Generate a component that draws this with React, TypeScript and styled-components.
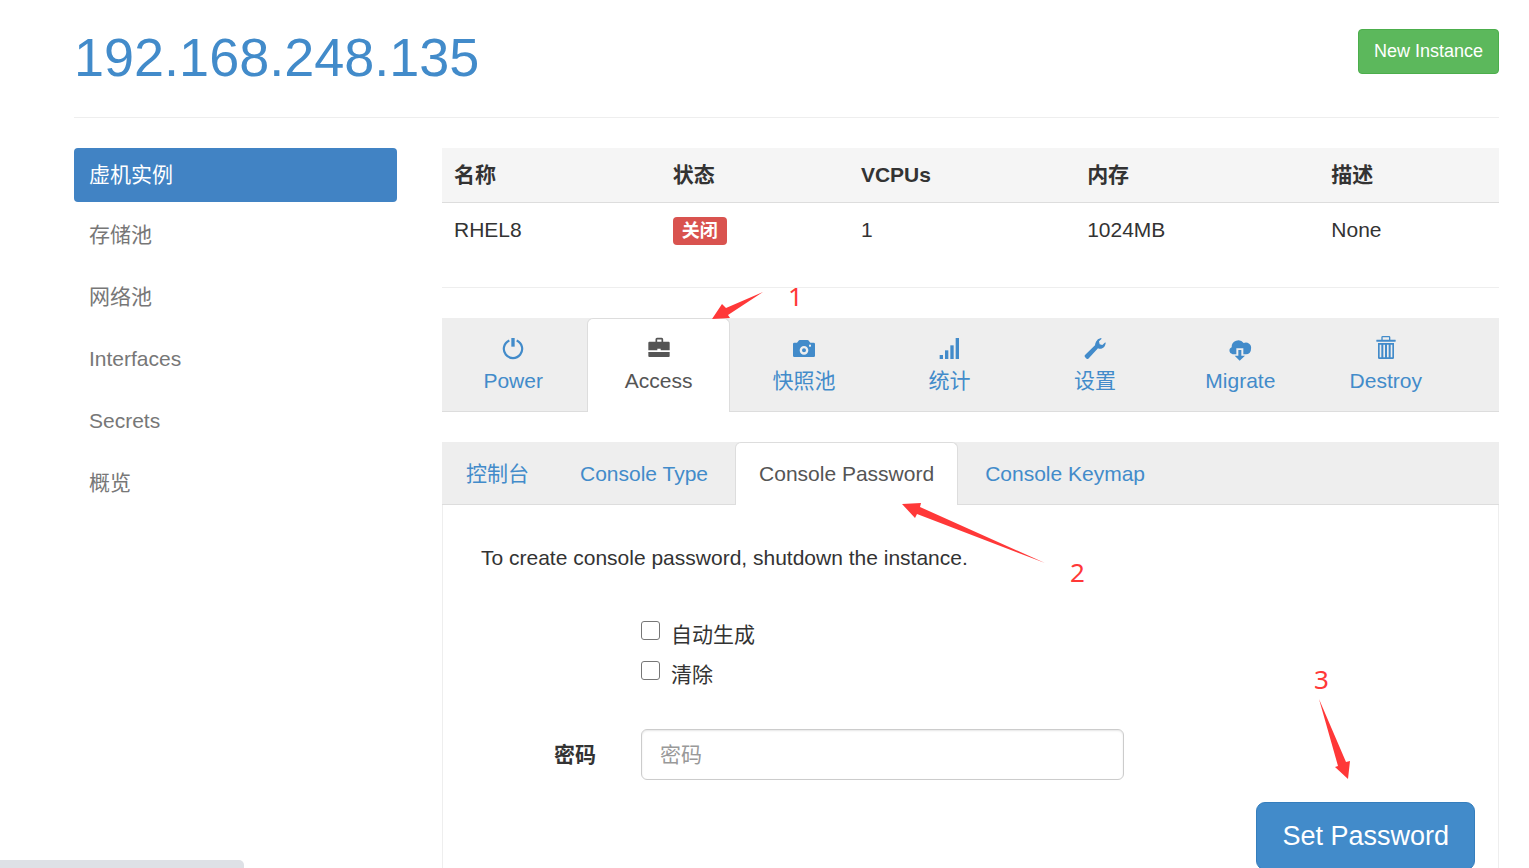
import React, { useState } from 'react';
import styled, { createGlobalStyle } from 'styled-components';

const LINK = '#428bca';
const BAR = '#eeeeee';
const LINE = '#dddddd';
const MARK = '#ff3838';

const GlobalStyle = createGlobalStyle`
  *, *::before, *::after { box-sizing: border-box; }
  body {
    margin: 0;
    background: #fff;
    color: #333;
    font-family: "Liberation Sans", Arial, "Noto Sans CJK SC", sans-serif;
    font-size: 21px;
    line-height: 30px;
  }
  button, input { font-family: inherit; }
  a { color: ${LINK}; text-decoration: none; }
`;

const Page = styled.div`
  position: relative;
  height: 100vh;
  padding: 0 30px 0 74px;
  overflow-x: hidden;
  overflow-y: auto;
  scrollbar-width: none;
`;

const Header = styled.header`
  display: flex;
  justify-content: space-between;
  align-items: center;
  padding: 27px 0 30px;
  border-bottom: 1px solid #eee;
  margin-bottom: 30px;
`;

const Title = styled.h1`
  margin: 0;
  font-size: 54px;
  line-height: 60px;
  font-weight: 400;
`;

const NewButton = styled.button`
  align-self: flex-start;
  margin-top: 2px;
  padding: 8px 15px;
  border: 1px solid #4cae4c;
  border-radius: 4px;
  background: #5cb85c;
  color: #fff;
  font-size: 18px;
  line-height: 27px;
`;

const Columns = styled.div`
  display: grid;
  grid-template-columns: 323fr 1057fr;
  gap: 45px;
  align-items: start;
`;

const SideNav = styled.nav`
  display: flex;
  flex-direction: column;
  gap: 6px;
`;

const SideLink = styled.a<{ $active?: boolean }>`
  padding: ${(p) => (p.$active ? '12px 15px' : '12px 15px 14px')};
  border-radius: 4px;
  background: ${(p) => (p.$active ? '#4183c4' : 'transparent')};
  color: ${(p) => (p.$active ? '#fff' : '#777')};
`;

const Main = styled.main`
  min-width: 0;
`;

const InstanceTable = styled.table`
  width: 100%;
  table-layout: fixed;
  border-collapse: separate;
  border-spacing: 0;
`;

const Th = styled.th<{ $share: number }>`
  width: ${(p) => p.$share}%;
  padding: 12px;
  background: #f5f5f5;
  border-bottom: 1px solid ${LINE};
  text-align: left;
  font-weight: 700;
`;

const Td = styled.td`
  height: 54px;
  padding: 0 12px;
`;

const StatusLabel = styled.span`
  display: block;
  width: fit-content;
  margin-top: 2px;
  padding: 0 9px;
  border-radius: 4px;
  background: #d9534f;
  color: #fff;
  font-size: 18px;
  font-weight: 700;
  line-height: 28px;
`;

const Rule = styled.hr`
  margin: 30px 0;
  border: 0;
  border-top: 1px solid #eee;
`;

const TabBar = styled.nav<{ $inset?: number }>`
  display: flex;
  gap: 3px;
  padding-right: ${(p) => p.$inset || 0}px;
  background: ${BAR};
  border-bottom: 1px solid ${LINE};
`;

const Tab = styled.a<{ $active?: boolean }>`
  margin-bottom: -1px;
  padding: 16px 23px;
  border: 1px solid ${(p) => (p.$active ? LINE : 'transparent')};
  border-bottom: 0;
  border-radius: 6px 6px 0 0;
  background: ${(p) => (p.$active ? '#fff' : 'transparent')};
  color: ${(p) => (p.$active ? '#555' : LINK)};
`;

const IconTab = styled(Tab)`
  flex: 1 1 0;
  display: flex;
  flex-direction: column;
  align-items: center;
  gap: 3px;
  padding: 14px 0 16px;
`;

const IconSlot = styled.span`
  display: flex;
  align-items: center;
  height: 30px;
`;

const Glyph = styled.svg`
  display: block;
  width: 22px;
  height: 22px;
  overflow: visible;
  fill: currentColor;
`;

const AccessTabs = styled.section`
  margin-top: 30px;
`;

const Panel = styled.div`
  padding: 38px 23px 23px;
  border: solid #eee;
  border-width: 0 1px;
`;

const Note = styled.p`
  margin: 0;
  padding: 0 15px;
`;

const FormGrid = styled.div`
  display: grid;
  grid-template-columns: 115fr 483fr 291fr;
  gap: 39px 45px;
  align-items: center;
  padding: 47px 15px 22px;
`;

const Checks = styled.div`
  grid-column: 2 / 4;
  display: flex;
  flex-direction: column;
  gap: 10px;
`;

const CheckLabel = styled.label`
  display: flex;
  align-items: flex-start;
  gap: 11px;
`;

const Checkbox = styled.input`
  flex: none;
  appearance: none;
  width: 19px;
  height: 19px;
  margin: 1px 0 0;
  border: 1px solid #767676;
  border-radius: 3px;
  background: #fff;
  &:checked { background: ${LINK}; }
`;

const FieldLabel = styled.label`
  grid-column: 1;
  font-weight: 700;
  text-align: right;
`;

const TextField = styled.input`
  width: 100%;
  height: 51px;
  padding: 9px 18px;
  border: 1px solid #ccc;
  border-radius: 6px;
  background: #fff;
  box-shadow: inset 0 1px 2px rgba(0, 0, 0, 0.1);
  color: #555;
  font-size: 21px;
  &::placeholder { color: #999; opacity: 1; }
`;

const Actions = styled.div`
  display: flex;
  justify-content: flex-end;
`;

const SubmitButton = styled.button`
  padding: 15px 25px;
  border: 1px solid #357ebd;
  border-radius: 9px;
  background: ${LINK};
  color: #fff;
  font-size: 27px;
  line-height: 36px;
`;

const Marks = styled.svg`
  position: absolute;
  top: 0;
  left: 0;
  width: 1px;
  height: 1px;
  overflow: visible;
  pointer-events: none;
  fill: ${MARK};
`;

const MarkNumber = styled.span<{ $x: number; $y: number }>`
  position: absolute;
  left: ${(p) => p.$x}px;
  top: ${(p) => p.$y}px;
  color: ${MARK};
  font-family: "Noto Sans", "Open Sans", sans-serif;
  font-size: 26px;
  line-height: 30px;
`;

const StatusBubble = styled.div`
  position: fixed;
  left: 0;
  bottom: 0;
  width: 244px;
  height: 8px;
  border-top-right-radius: 5px;
  background: #dee1e6;
`;

const icons = {
  power: (
    <>
      <path d="M22 10.5A27.5 27.5 0 1 0 44 10.5" fill="none" stroke="currentColor" strokeWidth="6.5" />
      <rect x="28" y="3" width="10" height="26" />
    </>
  ),
  briefcase: (
    <>
      <path d="M25 16V7Q25 5 27 5H41Q43 5 43 7V16" fill="none" stroke="currentColor" strokeWidth="5" />
      <path d="M4 14H62Q65 14 65 18V40H38V35H28V40H1V18Q1 14 4 14Z" />
      <path d="M1 45H65V57Q65 60 62 60H4Q1 60 1 57Z" />
    </>
  ),
  camera: (
    <>
      <path d="M4 17H12L18 10Q19 9 21 9H43Q45 9 46 10L52 17H62Q66 17 66 21V56Q66 60 62 60H4Q0 60 0 56V21Q0 17 4 17Z" />
      <circle cx="33" cy="40" r="9.5" fill="none" stroke={BAR} strokeWidth="7" />
      <rect x="48" y="23" width="6" height="6" fill={BAR} />
    </>
  ),
  signal: (
    <>
      <rect x="5" y="54" width="10" height="12" />
      <rect x="21" y="40" width="10" height="26" />
      <rect x="37" y="25" width="10" height="41" />
      <rect x="53" y="3" width="10" height="63" />
    </>
  ),
  wrench: (
    <path d="M36 14Q40 5 51 3L53 5L45 13L47 22L55 24L64 16L65 19Q63 31 55 34Q48 37 42 34L13 65Q9 67 6 64L3 60Q0 57 3 54L33 25Q33 20 36 14Z" />
  ),
  migrate: (
    <>
      <path d="M11 52A11 11 0 0 1 8 31A20 20 0 0 1 44 18A16 16 0 0 1 66 36A15 15 0 0 1 50 52H43V34H22V52Z" />
      <path d="M28 39H37V56H48L32 71L17 56H28Z" />
    </>
  ),
  trash: (
    <>
      <path d="M21 9V1Q21 -1 23 -1H42Q44 -1 44 1V9" fill="none" stroke="currentColor" strokeWidth="4" />
      <rect x="4" y="8" width="58" height="6" rx="1" />
      <path
        fillRule="evenodd"
        d="M9 18H57V62Q57 66 53 66H13Q9 66 9 62ZM14 23V61H19V23ZM25 23V61H30V23ZM36 23V61H41V23ZM47 23V61H52V23Z"
      />
    </>
  ),
};

const sideItems = ['虚机实例', '存储池', '网络池', 'Interfaces', 'Secrets', '概览'];

const actionTabs: { icon: keyof typeof icons; text: string }[] = [
  { icon: 'power', text: 'Power' },
  { icon: 'briefcase', text: 'Access' },
  { icon: 'camera', text: '快照池' },
  { icon: 'signal', text: '统计' },
  { icon: 'wrench', text: '设置' },
  { icon: 'migrate', text: 'Migrate' },
  { icon: 'trash', text: 'Destroy' },
];

const accessTabs = ['控制台', 'Console Type', 'Console Password', 'Console Keymap'];

export default function App() {
  const [auto, setAuto] = useState(false);
  const [clear, setClear] = useState(false);
  const [password, setPassword] = useState('');

  return (
    <>
      <GlobalStyle />
      <Page>
        <Header>
          <Title>
            <a href="#host">192.168.248.135</a>
          </Title>
          <NewButton type="button">New Instance</NewButton>
        </Header>

        <Columns>
          <SideNav>
            {sideItems.map((item, i) => (
              <SideLink key={item} href={`#side-${i}`} $active={i === 0}>
                {item}
              </SideLink>
            ))}
          </SideNav>

          <Main>
            <InstanceTable>
              <thead>
                <tr>
                  <Th $share={20.7}>名称</Th>
                  <Th $share={17.8}>状态</Th>
                  <Th $share={21.4}>VCPUs</Th>
                  <Th $share={23.1}>内存</Th>
                  <Th $share={17}>描述</Th>
                </tr>
              </thead>
              <tbody>
                <tr>
                  <Td>RHEL8</Td>
                  <Td>
                    <StatusLabel>关闭</StatusLabel>
                  </Td>
                  <Td>1</Td>
                  <Td>1024MB</Td>
                  <Td>None</Td>
                </tr>
              </tbody>
            </InstanceTable>

            <Rule />

            <TabBar $inset={42}>
              {actionTabs.map((tab) => (
                <IconTab key={tab.icon} href={`#${tab.icon}`} $active={tab.text === 'Access'}>
                  <IconSlot>
                    <Glyph viewBox="0 0 66 66" aria-hidden="true">
                      {icons[tab.icon]}
                    </Glyph>
                  </IconSlot>
                  {tab.text}
                </IconTab>
              ))}
            </TabBar>

            <AccessTabs>
              <TabBar>
                {accessTabs.map((text, i) => (
                  <Tab key={text} href={`#access-${i}`} $active={i === 2}>
                    {text}
                  </Tab>
                ))}
              </TabBar>
              <Panel>
                <Note>To create console password, shutdown the instance.</Note>
                <form onSubmit={(e) => e.preventDefault()}>
                  <FormGrid>
                    <Checks>
                      <CheckLabel>
                        <Checkbox type="checkbox" checked={auto} onChange={(e) => setAuto(e.target.checked)} />
                        自动生成
                      </CheckLabel>
                      <CheckLabel>
                        <Checkbox type="checkbox" checked={clear} onChange={(e) => setClear(e.target.checked)} />
                        清除
                      </CheckLabel>
                    </Checks>
                    <FieldLabel htmlFor="console-password">密码</FieldLabel>
                    <TextField
                      id="console-password"
                      type="text"
                      placeholder="密码"
                      value={password}
                      onChange={(e) => setPassword(e.target.value)}
                    />
                  </FormGrid>
                  <Actions>
                    <SubmitButton type="submit">Set Password</SubmitButton>
                  </Actions>
                </form>
              </Panel>
            </AccessTabs>
          </Main>
        </Columns>

        <Marks aria-hidden="true">
          <path d="M763 292L728 315L730 318L712 319L722 304L726 308Z" />
          <path d="M902 504L921 503L920 507L1045 563L917 514L915 518Z" />
          <path d="M1319 699L1346 762L1350 761L1348 779L1335 767L1338 766Z" />
        </Marks>
        <MarkNumber $x={788} $y={281}>1</MarkNumber>
        <MarkNumber $x={1070} $y={557}>2</MarkNumber>
        <MarkNumber $x={1314} $y={664}>3</MarkNumber>
      </Page>
      <StatusBubble />
    </>
  );
}
